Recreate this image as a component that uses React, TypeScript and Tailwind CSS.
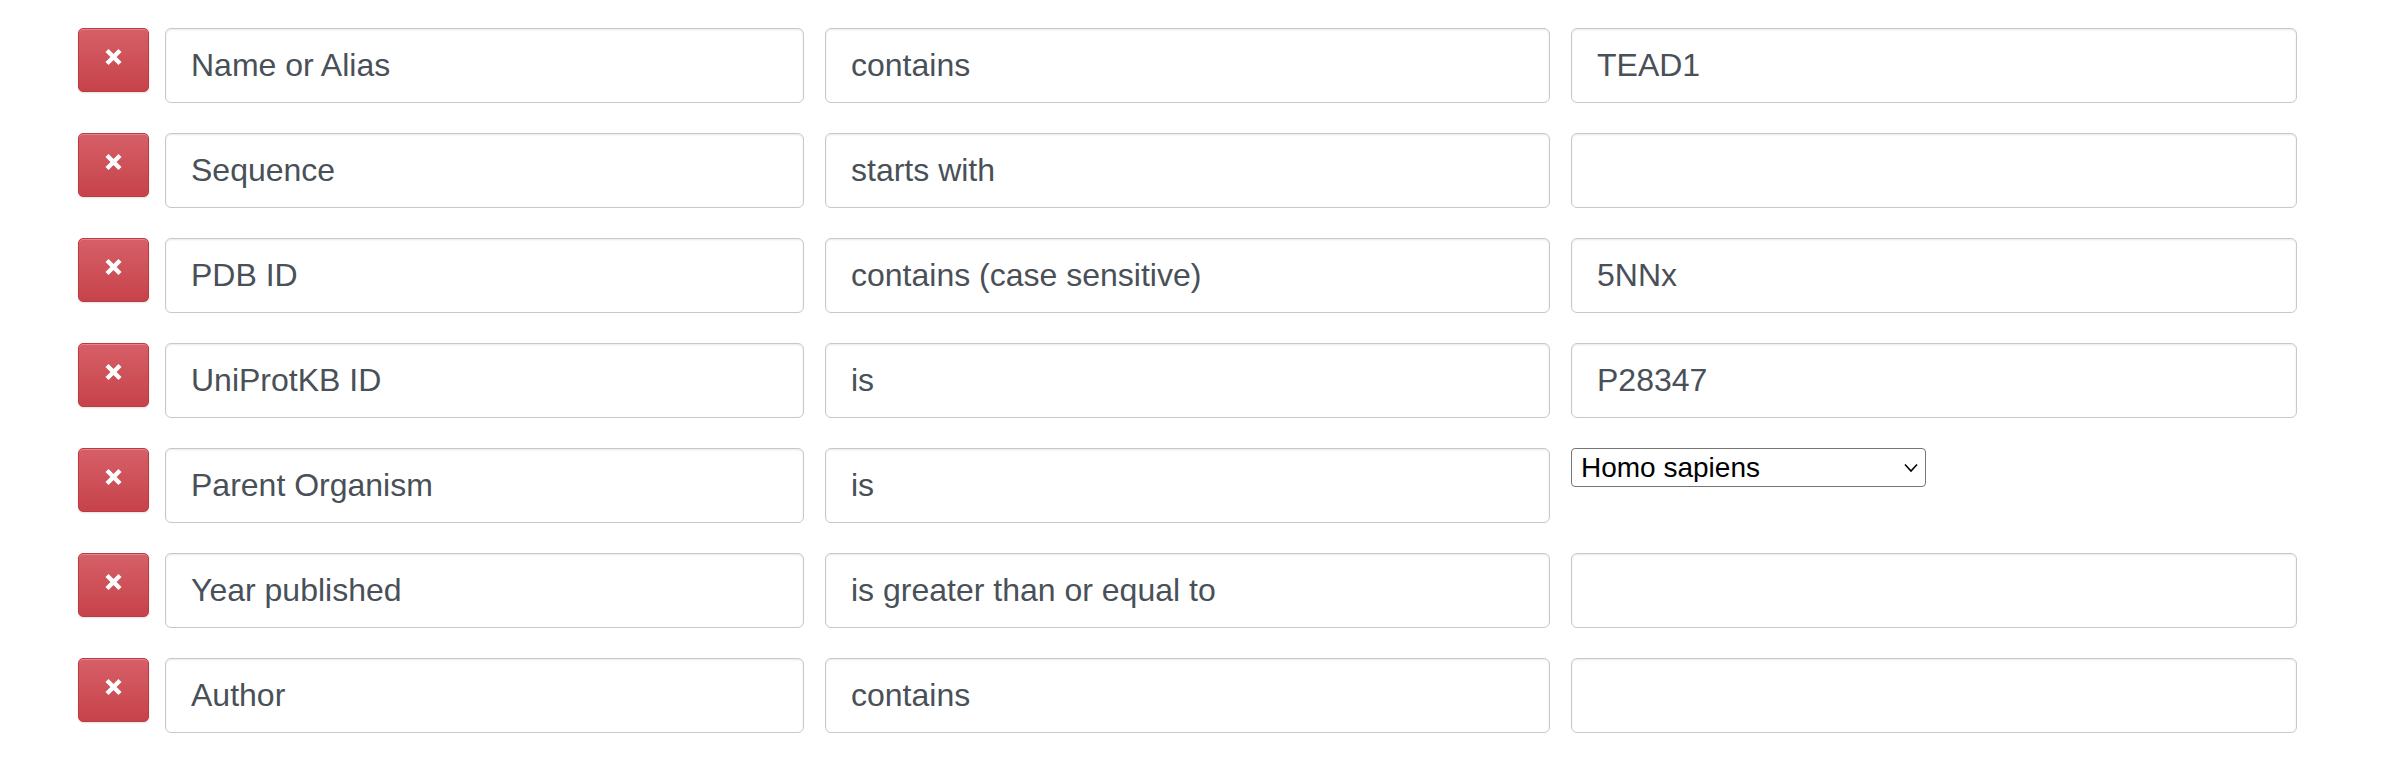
import React from 'react'

type Row = {
  field: string
  op: string
  value?: string
  select?: string
}

const rows: Row[] = [
  { field: 'Name or Alias', op: 'contains', value: 'TEAD1' },
  { field: 'Sequence', op: 'starts with', value: '' },
  { field: 'PDB ID', op: 'contains (case sensitive)', value: '5NNx' },
  { field: 'UniProtKB ID', op: 'is', value: 'P28347' },
  { field: 'Parent Organism', op: 'is', select: 'Homo sapiens' },
  { field: 'Year published', op: 'is greater than or equal to', value: '' },
  { field: 'Author', op: 'contains', value: '' },
]

const inputCls =
  "h-[75px] rounded-[6px] border border-[#c4c9d0] bg-white pl-[25px] pr-3 text-[32px] text-[#495057] shadow-[inset_0_1px_2px_rgba(0,0,0,0.09)] outline-none font-['Liberation_Sans',Arial,sans-serif]"

function RemoveButton() {
  return (
    <button
      type="button"
      className="flex h-[64px] w-[71px] shrink-0 justify-center rounded-[5px] border border-[#c0393f] bg-gradient-to-b from-[#d65f67] to-[#c7424a] pt-[19px] shadow-[inset_0_1px_0_rgba(255,255,255,0.25),0_1px_2px_rgba(0,0,0,0.12)]"
    >
      <svg className="shrink-0" width="19" height="18" viewBox="0 0 19 18">
        <path d="M3 2.5 L16 15.5 M16 2.5 L3 15.5" stroke="#fff" strokeWidth="4.4" strokeLinecap="butt" />
      </svg>
    </button>
  )
}

function OrganismSelect({ value }: { value: string }) {
  return (
    <div className="relative w-[355px]">
      <select
        defaultValue={value}
        className="h-[39px] w-full appearance-none rounded-[4px] border border-[#767676] bg-white pl-[9px] text-[28px] leading-none text-black font-['Liberation_Sans',Arial,sans-serif]"
      >
        <option>Homo sapiens</option>
        <option>Mus musculus</option>
        <option>Rattus norvegicus</option>
      </select>
      <svg
        className="pointer-events-none absolute right-[8px] top-[15px]"
        width="14"
        height="10"
        viewBox="0 0 14 10"
      >
        <path d="M1 1.5 L7 8 L13 1.5" fill="none" stroke="#000" strokeWidth="1.6" />
      </svg>
    </div>
  )
}

export default function App() {
  return (
    <div className="min-h-[760px] w-[2390px] bg-white pl-[78px] pt-[28px] font-['Liberation_Sans',Arial,sans-serif]">
      <div className="flex flex-col gap-[30px]">
        {rows.map((r) => (
          <div key={r.field} className="flex items-start">
            <RemoveButton />
            <input readOnly value={r.field} className={`ml-[16px] w-[639px] ${inputCls}`} />
            <input readOnly value={r.op} className={`ml-[21px] w-[725px] ${inputCls}`} />
            <div className="ml-[21px] w-[726px]">
              {r.select ? (
                <OrganismSelect value={r.select} />
              ) : (
                <input readOnly value={r.value} className={`w-full ${inputCls}`} />
              )}
            </div>
          </div>
        ))}
      </div>
    </div>
  )
}
